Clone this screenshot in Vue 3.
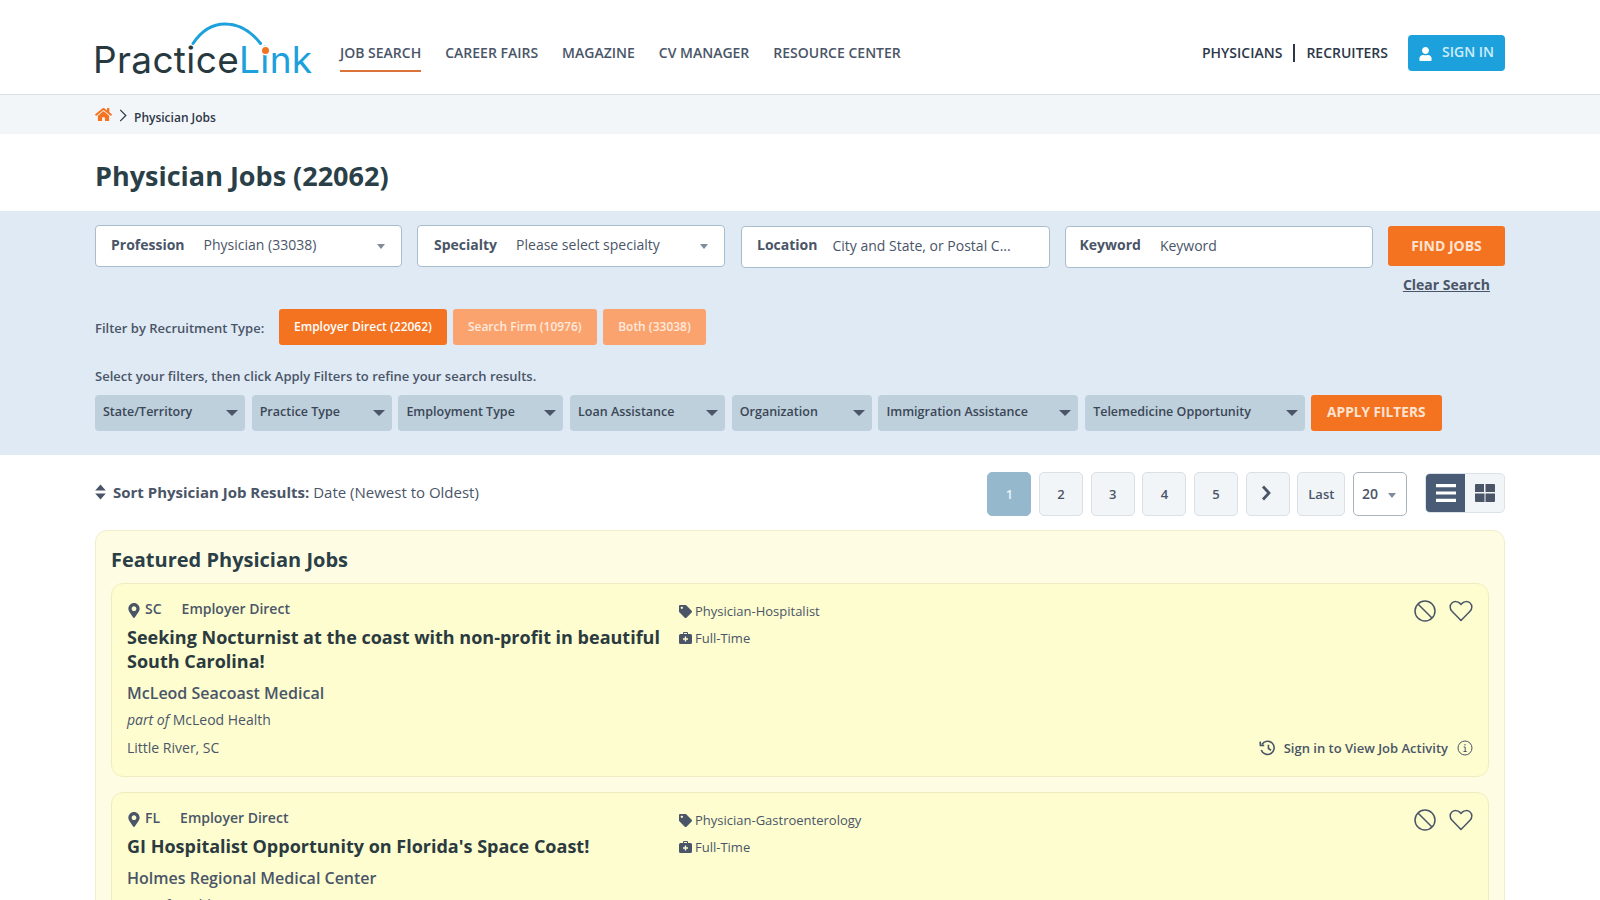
<template>
  <div class="page">
    <header class="topbar">
      <div class="wrap topbar-in">
        <a class="logo">
          <span class="logo-dark">Practice</span><span class="logo-blue">Link</span>
          <svg class="logo-arc" viewBox="0 0 80 30" width="80" height="30">
            <path d="M3 21.500C12 8 23 2 35 2C47 2 60 8 70.500 21.500" fill="none" stroke="#1da1dc" stroke-width="3" stroke-linecap="round" />
          </svg>
          <span class="logo-dot"></span>
        </a>
        <nav class="mainnav">
          <a v-for="(item, i) in navItems" :key="item" :class="{ active: i === 0 }">{{ item }}</a>
        </nav>
        <div class="topright">
          <a>PHYSICIANS</a>
          <span class="sep"></span>
          <a>RECRUITERS</a>
          <button class="signin">
            <svg viewBox="0 0 448 512" width="13" height="14"><path fill="#fff" d="M224 256c70.7 0 128-57.3 128-128S294.7 0 224 0 96 57.3 96 128s57.3 128 128 128zm89.6 32h-16.7c-22.2 10.2-46.9 16-72.900 16s-50.600-5.800-72.900-16h-16.700C60.200 288 0 348.200 0 422.400V464c0 26.500 21.500 48 48 48h352c26.500 0 48-21.500 48-48v-41.600c0-74.200-60.200-134.400-134.400-134.400z" /></svg>
            SIGN IN
          </button>
        </div>
      </div>
    </header>

    <div class="crumbs">
      <div class="wrap crumbs-in">
        <svg viewBox="0 0 576 512" width="17" height="15"><path fill="#f47321" d="M280.370 148.260L96 300.110V464a16 16 0 0 0 16 16l112.060-.29a16 16 0 0 0 15.920-16V368a16 16 0 0 1 16-16h64a16 16 0 0 1 16 16v95.640a16 16 0 0 0 16 16.050L464 480a16 16 0 0 0 16-16V300L295.670 148.260a12.190 12.190 0 0 0-15.300 0zM571.600 251.470L488 182.560V44.050a12 12 0 0 0-12-12h-56a12 12 0 0 0-12 12v72.610L318.470 43a48 48 0 0 0-61 0L4.340 251.470a12 12 0 0 0-1.600 16.900l25.500 31A12 12 0 0 0 45.150 301l235.220-193.740a12.190 12.190 0 0 1 15.300 0L530.900 301a12 12 0 0 0 16.900-1.600l25.500-31a12 12 0 0 0-1.700-16.930z" /></svg>
        <svg class="crumb-chev" viewBox="0 0 8 14" width="8" height="13"><path d="M1 1l6 6-6 6" fill="none" stroke="#2d3748" stroke-width="1.300" /></svg>
        <span>Physician Jobs</span>
      </div>
    </div>

    <div class="wrap">
      <h1>Physician Jobs (22062)</h1>
    </div>

    <section class="band">
      <div class="wrap">
        <div class="search-row">
          <div class="field sel profession">
            <b>Profession</b><span>Physician (33038)</span><i class="caret"></i>
          </div>
          <div class="field sel specialty">
            <b>Specialty</b><span>Please select specialty</span><i class="caret"></i>
          </div>
          <div class="field inp location">
            <b>Location</b><span>City and State, or Postal C...</span>
          </div>
          <div class="field inp keyword">
            <b>Keyword</b><span>Keyword</span>
          </div>
          <button class="find">FIND JOBS</button>
        </div>
        <div class="clear-row"><a>Clear Search</a></div>

        <div class="recruit-row">
          <span class="recruit-label">Filter by Recruitment Type:</span>
          <button class="rtype on">Employer Direct (22062)</button>
          <button class="rtype">Search Firm (10976)</button>
          <button class="rtype">Both (33038)</button>
        </div>

        <p class="hint">Select your filters, then click Apply Filters to refine your search results.</p>

        <div class="filter-row">
          <div v-for="f in filters" :key="f.name" class="filter" :style="{ width: f.w + 'px' }">
            {{ f.name }}<i class="caret big"></i>
          </div>
          <button class="apply">APPLY FILTERS</button>
        </div>
      </div>
    </section>

    <div class="wrap">
      <div class="results-bar">
        <div class="sort">
          <svg viewBox="0 0 11 16" width="11" height="16"><path fill="#4a5568" d="M5.500 0.500L10.800 6.500H.2zM5.500 15.500L.2 9.500H10.800z" /></svg>
          <b>Sort Physician Job Results:</b> Date (Newest to Oldest)
        </div>
        <div class="pager">
          <a class="pg cur">1</a>
          <a class="pg">2</a>
          <a class="pg">3</a>
          <a class="pg">4</a>
          <a class="pg">5</a>
          <a class="pg">
            <svg class="pg-next" viewBox="0 0 10 16" width="10" height="16"><path d="M2 1.500L8 8l-6 6.500" fill="none" stroke="#4a5568" stroke-width="2.800" /></svg>
          </a>
          <a class="pg last">Last</a>
          <div class="perpage">20<i class="caret"></i></div>
          <div class="toggle">
            <span class="tg on">
              <svg viewBox="0 0 20 18" width="20" height="18"><path fill="#fff" d="M0 0h20v3.200H0zM0 7.400h20v3.200H0zM0 14.800h20v3.200H0z" /></svg>
            </span>
            <span class="tg">
              <svg viewBox="0 0 20 18" width="20" height="18"><path fill="#4a5568" d="M0 1a1 1 0 0 1 1-1h8v8H0zM10.500 0h8.500a1 1 0 0 1 1 1v7h-9.500zM0 9.500h9.500V18H1a1 1 0 0 1-1-1zM10.500 9.500H20V17a1 1 0 0 1-1 1h-8.500z" /></svg>
            </span>
          </div>
        </div>
      </div>

      <section class="featured">
        <h2>Featured Physician Jobs</h2>
        <article v-for="job in jobs" :key="job.title" class="job">
          <div class="job-main">
            <div class="job-meta">
              <svg viewBox="0 0 384 512" width="12" height="15"><path fill="#4a5568" d="M172.268 501.670C26.970 291.031 0 256.643 0 192 0 85.961 85.961 0 192 0s192 85.961 192 192c0 64.643-26.970 99.031-172.268 309.670-9.535 13.774-29.930 13.773-39.464 0zM192 272c44.183 0 80-35.817 80-80s-35.817-80-80-80-80 35.817-80 80 35.817 80 80 80z" /></svg>
              <span class="st">{{ job.state }}</span>
              <span>Employer Direct</span>
            </div>
            <h3>{{ job.title }}</h3>
            <div class="company">{{ job.company }}</div>
            <div class="parent"><em>part of</em> {{ job.parent }}</div>
            <div class="city">{{ job.city }}</div>
          </div>
          <div class="job-tags">
            <div class="tag">
              <svg viewBox="0 0 512 512" width="13" height="13"><path fill="#4a5568" d="M0 252.118V48C0 21.490 21.490 0 48 0h204.118a48 48 0 0 1 33.941 14.059l211.882 211.882c18.745 18.745 18.745 49.137 0 67.882L293.823 497.941c-18.745 18.745-49.137 18.745-67.882 0L14.059 286.059A48 48 0 0 1 0 252.118zM112 64c-26.510 0-48 21.490-48 48s21.490 48 48 48 48-21.490 48-48-21.490-48-48-48z" /></svg>
              {{ job.specialty }}
            </div>
            <div class="tag">
              <svg viewBox="0 0 13 12" width="13" height="12"><path fill="#4a5568" fill-rule="evenodd" d="M4 2V1a1 1 0 0 1 1-1h3a1 1 0 0 1 1 1v1h2.500A1.500 1.500 0 0 1 13 3.500v7a1.500 1.500 0 0 1-1.500 1.500h-10A1.500 1.500 0 0 1 0 10.500v-7A1.500 1.500 0 0 1 1.500 2zM5 2h3V1H5zM5.800 4.500v1.800H4v1.400h1.800v1.800h1.400V7.700H9V6.300H7.200V4.500z" /></svg>
              Full-Time
            </div>
          </div>
          <div class="job-side">
            <div class="job-actions">
              <svg viewBox="0 0 24 24" width="24" height="24" fill="none" stroke="#4a5568" stroke-width="1.500"><circle cx="12" cy="12" r="10" /><path d="M5 5l14 14" /></svg>
              <svg viewBox="0 0 24 22" width="24" height="22" fill="none" stroke="#4a5568" stroke-width="1.500"><path d="M12 20.500L3 11.300C.5 8.700.7 5 2.900 3 5.200 1 8.800 1.200 11 3.400l1 1.100 1-1.100C15.200 1.200 18.800 1 21.100 3c2.200 2 2.400 5.700-.1 8.300z" /></svg>
            </div>
            <div class="activity">
              <svg viewBox="0 0 18 16" width="17" height="16" fill="none" stroke="#4a5568" stroke-width="1.700"><path d="M3.200 4A7 7 0 1 1 2.400 10" /><path d="M1.200 1.200l.3 4h4" /><path d="M10 4.500V8.500l2.700 1.900" /></svg>
              <span>Sign in to View Job Activity</span>
              <svg class="info" viewBox="0 0 16 16" width="16" height="16" fill="none" stroke="#4a5568" stroke-width="1"><circle cx="8" cy="8" r="7" /><path d="M6.700 7h1.500v4.500M6.500 11.500h3.200M8 4v1.500" /></svg>
            </div>
          </div>
        </article>
      </section>
    </div>
  </div>
</template>

<script setup>
const navItems = ['JOB SEARCH', 'CAREER FAIRS', 'MAGAZINE', 'CV MANAGER', 'RESOURCE CENTER']

// 筛选下拉的宽度
const filters = [
  { name: 'State/Territory', w: 150 },
  { name: 'Practice Type', w: 140 },
  { name: 'Employment Type', w: 165 },
  { name: 'Loan Assistance', w: 155 },
  { name: 'Organization', w: 140 },
  { name: 'Immigration Assistance', w: 200 },
  { name: 'Telemedicine Opportunity', w: 220 }
]

const jobs = [
  {
    state: 'SC',
    title: 'Seeking Nocturnist at the coast with non-profit in beautiful South Carolina!',
    company: 'McLeod Seacoast Medical',
    parent: 'McLeod Health',
    city: 'Little River, SC',
    specialty: 'Physician-Hospitalist'
  },
  {
    state: 'FL',
    title: "GI Hospitalist Opportunity on Florida's Space Coast!",
    company: 'Holmes Regional Medical Center',
    parent: 'Health First',
    city: 'Melbourne, FL',
    specialty: 'Physician-Gastroenterology'
  }
]
</script>

<style>
html, body {
  margin: 0;
  background: #fff;
}
</style>

<style scoped>
.page {
  font-family: "Open Sans", "Liberation Sans", sans-serif;
  color: #4a5568;
}

.wrap {
  width: 1410px;
  margin: 0 auto;
}

.topbar {
  height: 94px;
  border-bottom: 1px solid #dcdfe3;
  box-shadow: 0 1px 1px rgba(0, 0, 0, 0.04);
}

.topbar-in {
  display: flex;
  align-items: center;
  height: 100%;
  padding-top: 10px;
  box-sizing: border-box;
}

.logo {
  position: relative;
  display: block;
  width: 247px;
  margin: -3px 0 0 -2px;
  font-family: Inter, "Liberation Sans", sans-serif;
  font-size: 37px;
  letter-spacing: 0.35px;
  line-height: 40px;
  padding-top: 18px;
  white-space: nowrap;
}

.logo-dark {
  color: #27393f;
}

.logo-blue {
  color: #1da1dc;
}

.logo-arc {
  position: absolute;
  left: 97px;
  top: 0;
}

.logo-dot {
  position: absolute;
  left: 168.500px;
  top: 25px;
  width: 7px;
  height: 7px;
  border-radius: 50%;
  background: #f47321;
  box-shadow: 0 0 0 1.500px #fff;
}

.mainnav {
  display: flex;
  gap: 24px;
}

.mainnav a {
  font-size: 14px;
  font-weight: 600;
  line-height: 20px;
  padding: 8px 0 7px;
  border-bottom: 2px solid transparent;
  position: relative;
  top: 1px;
}

.mainnav a.active {
  border-bottom-color: #d9733a;
}

.topright {
  margin-left: auto;
  display: flex;
  align-items: center;
  font-size: 14px;
  font-weight: 600;
  color: #2d3748;
}

.sep {
  width: 2px;
  height: 18px;
  background: #2d3748;
  margin: 2px 11px 0;
}

.signin {
  display: flex;
  align-items: center;
  gap: 10px;
  margin: 2px 0 0 20px;
  width: 97px;
  height: 36px;
  padding: 0 0 3px 11px;
  border: 0;
  border-radius: 4px;
  background: #1da1dc;
  color: #cdeefb;
  font: 600 14px "Open Sans", sans-serif;
}

.signin svg {
  margin-top: 4px;
}

.crumbs {
  height: 39px;
  background: #f3f6f9;
}

.crumbs-in {
  display: flex;
  align-items: center;
  height: 100%;
  font-size: 12px;
  font-weight: 600;
  color: #2d3748;
}

.crumb-chev {
  margin: 2px 7px 0 7px;
}

.crumbs-in span {
  position: relative;
  top: 3px;
}

h1 {
  margin: 0;
  height: 77px;
  line-height: 84px;
  font-size: 27px;
  font-weight: 700;
  color: #2a3f47;
}

.band {
  background: #e0eaf4;
  height: 244px;
  padding-top: 14px;
  box-sizing: border-box;
}

.search-row {
  display: flex;
  align-items: flex-start;
}

.field {
  display: flex;
  align-items: center;
  height: 42px;
  box-sizing: border-box;
  padding: 0 15px;
  background: #fff;
  border: 1px solid #a9bccb;
  border-radius: 4px;
  font-size: 14px;
  position: relative;
}

.field b {
  font-weight: 700;
  position: relative;
  top: -2px;
}

.field span {
  position: relative;
  top: -2px;
}

.inp {
  margin-top: 1px;
}

.inp b {
  top: -3px;
}

.profession {
  width: 307px;
}

.profession b {
  margin-right: 19px;
}

.specialty {
  width: 308px;
  margin-left: 15px;
  padding-left: 16px;
}

.specialty b {
  margin-right: 19px;
}

.location {
  width: 309px;
  margin-left: 16px;
}

.location b {
  margin-right: 15px;
}

.keyword {
  width: 308px;
  margin-left: 14.500px;
  padding-left: 14px;
}

.keyword b {
  margin-right: 19px;
}

.caret {
  position: absolute;
  right: 16px;
  top: 18px;
  border-left: 4px solid transparent;
  border-right: 4px solid transparent;
  border-top: 5px solid #808b99;
}

.caret.big {
  right: 7px;
  top: 15px;
  border-left-width: 6px;
  border-right-width: 6px;
  border-top: 6px solid #4a5568;
}

.find {
  margin: 1px 0 0 15.500px;
  width: 117px;
  height: 40px;
  padding: 0 0 2px;
  border: 0;
  border-radius: 3px;
  background: #f47321;
  color: #fde3d2;
  font: 700 14px "Open Sans", sans-serif;
}

.clear-row {
  height: 41px;
  text-align: right;
  padding-right: 15px;
  font-size: 14px;
  font-weight: 700;
  line-height: 34px;
}

.clear-row a {
  text-decoration: underline;
}

.recruit-row {
  display: flex;
  align-items: center;
  height: 36px;
  font-size: 13px;
  font-weight: 600;
}

.recruit-label {
  width: 184px;
  position: relative;
  top: 1px;
}

.rtype {
  height: 36px;
  padding: 0 15px 1px;
  margin-right: 6px;
  border: 0;
  border-radius: 3px;
  background: #fba36f;
  color: #ffeadd;
  font: 600 12px "Open Sans", sans-serif;
  white-space: nowrap;
}

.rtype:last-child {
  padding: 0 15.500px 1px;
}

.rtype.on {
  background: #f47321;
  color: #fff;
}

.hint {
  margin: 0;
  height: 50px;
  line-height: 62px;
  font-size: 13px;
  font-weight: 600;
}

.filter-row {
  display: flex;
  gap: 6.700px;
}

.filter {
  position: relative;
  height: 36px;
  line-height: 33px;
  padding-left: 8px;
  box-sizing: border-box;
  background: #bdd0dc;
  border-radius: 4px;
  font-size: 12.500px;
  font-weight: 600;
  color: #3b4656;
}

.apply {
  margin-left: -1px;
  width: 131px;
  height: 36px;
  padding: 0 0 3px;
  border: 0;
  border-radius: 3px;
  background: #f47321;
  color: #fde3d2;
  font: 700 13.700px "Open Sans", sans-serif;
}

.results-bar {
  display: flex;
  justify-content: space-between;
  align-items: flex-start;
  height: 75px;
  padding-top: 17px;
  box-sizing: border-box;
}

.sort {
  display: flex;
  align-items: center;
  font-size: 15px;
  height: 42px;
  white-space: pre;
  margin-top: -1px;
}

.sort svg {
  margin-right: 7px;
}

.sort b {
  font-weight: 700;
}

.pager {
  display: flex;
  align-items: flex-start;
}

.pg {
  display: flex;
  align-items: center;
  justify-content: center;
  width: 44px;
  height: 44px;
  margin-right: 7.670px;
  box-sizing: border-box;
  border: 1px solid #d9e0e6;
  border-radius: 5px;
  background: #f1f5f8;
  font-size: 13px;
  font-weight: 600;
}

.pg-next {
  margin: -3px 3px 0 0;
}

.pg.cur {
  background: #95b8cd;
  border-color: #95b8cd;
  color: #e4f4fb;
}

.pg.last {
  width: 48px;
}

.perpage {
  position: relative;
  width: 54px;
  height: 44px;
  line-height: 41px;
  padding-left: 8px;
  box-sizing: border-box;
  border: 1px solid #a9b4bd;
  border-radius: 5px;
  font-size: 14px;
  font-weight: 600;
}

.perpage .caret {
  right: 10px;
  top: 20px;
}

.toggle {
  display: flex;
  margin-left: 18px;
  margin-top: 1px;
  width: 80px;
  height: 40px;
  border-radius: 5px;
  overflow: hidden;
  background: #f1f5f8;
  border: 1px solid #dce3e8;
  box-sizing: border-box;
}

.tg {
  flex: 1;
  display: flex;
  align-items: center;
  justify-content: center;
}

.tg.on {
  background: #4a5b75;
}

.featured {
  background: #fefde4;
  border: 1px solid #f1edc8;
  border-radius: 12px;
  padding: 0 15px 15px;
}

h2 {
  margin: 0;
  height: 52px;
  line-height: 57px;
  font-size: 20px;
  font-weight: 700;
  color: #2a3f47;
}

.job {
  display: flex;
  height: 194px;
  padding: 15px;
  margin-bottom: 15px;
  box-sizing: border-box;
  background: #fefdcf;
  border: 1px solid #f0ecc0;
  border-radius: 12px;
}

.job-main {
  width: 552px;
  flex: none;
}

.job-meta {
  display: flex;
  align-items: center;
  font-size: 14px;
  font-weight: 600;
  line-height: 20px;
}

.job-meta svg {
  margin: 2px 0 0 1px;
}

.job-meta .st {
  margin: 0 20px 0 5px;
}

h3 {
  margin: 6px 0 0;
  font-size: 18px;
  font-weight: 700;
  line-height: 24px;
  color: #2a3a3f;
}

.company {
  margin-top: 9px;
  font-size: 16px;
  font-weight: 600;
  line-height: 22px;
}

.parent {
  margin-top: 6px;
  font-size: 14px;
  line-height: 20px;
}

.city {
  margin-top: 8px;
  font-size: 14px;
  line-height: 20px;
}

.job-tags {
  width: 400px;
  flex: none;
  margin-top: 2px;
}

.tag {
  display: flex;
  align-items: center;
  gap: 3px;
  height: 20px;
  margin-bottom: 7px;
  font-size: 13px;
}

.job-side {
  flex: 1;
  display: flex;
  flex-direction: column;
  justify-content: space-between;
  align-items: flex-end;
}

.job-actions {
  display: flex;
  align-items: center;
  gap: 12px;
}

.activity {
  display: flex;
  align-items: center;
  font-size: 13px;
  font-weight: 600;
  margin-bottom: 4px;
}

.activity span {
  margin: 0 9px 0 8px;
}
</style>
